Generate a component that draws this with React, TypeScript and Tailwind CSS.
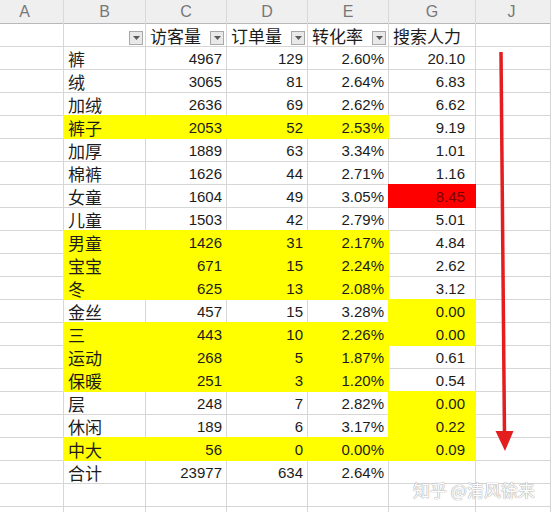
import React from "react";

type Fill = "" | "y" | "r";
type Row = { b: string; c: string; d: string; e: string; g: string; fb: Fill; fg: Fill };

const rows: Row[] = [
  { b: "裤", c: "4967", d: "129", e: "2.60%", g: "20.10", fb: "", fg: "" },
  { b: "绒", c: "3065", d: "81", e: "2.64%", g: "6.83", fb: "", fg: "" },
  { b: "加绒", c: "2636", d: "69", e: "2.62%", g: "6.62", fb: "", fg: "" },
  { b: "裤子", c: "2053", d: "52", e: "2.53%", g: "9.19", fb: "y", fg: "" },
  { b: "加厚", c: "1889", d: "63", e: "3.34%", g: "1.01", fb: "", fg: "" },
  { b: "棉裤", c: "1626", d: "44", e: "2.71%", g: "1.16", fb: "", fg: "" },
  { b: "女童", c: "1604", d: "49", e: "3.05%", g: "8.45", fb: "", fg: "r" },
  { b: "儿童", c: "1503", d: "42", e: "2.79%", g: "5.01", fb: "", fg: "" },
  { b: "男童", c: "1426", d: "31", e: "2.17%", g: "4.84", fb: "y", fg: "" },
  { b: "宝宝", c: "671", d: "15", e: "2.24%", g: "2.62", fb: "y", fg: "" },
  { b: "冬", c: "625", d: "13", e: "2.08%", g: "3.12", fb: "y", fg: "" },
  { b: "金丝", c: "457", d: "15", e: "3.28%", g: "0.00", fb: "", fg: "y" },
  { b: "三", c: "443", d: "10", e: "2.26%", g: "0.00", fb: "y", fg: "y" },
  { b: "运动", c: "268", d: "5", e: "1.87%", g: "0.61", fb: "y", fg: "" },
  { b: "保暖", c: "251", d: "3", e: "1.20%", g: "0.54", fb: "y", fg: "" },
  { b: "层", c: "248", d: "7", e: "2.82%", g: "0.00", fb: "", fg: "y" },
  { b: "休闲", c: "189", d: "6", e: "3.17%", g: "0.22", fb: "", fg: "y" },
  { b: "中大", c: "56", d: "0", e: "0.00%", g: "0.09", fb: "y", fg: "y" },
  { b: "合计", c: "23977", d: "634", e: "2.64%", g: "", fb: "", fg: "" },
];

const cols = "grid grid-cols-[64px_82px_81px_81px_81px_87px_1fr]";
const CN = { fontFamily: '"Noto Sans CJK SC", "Noto Sans", sans-serif' };
const NUM = { fontFamily: '"Liberation Sans", Arial, sans-serif' };

function fillCls(f: Fill) {
  if (f === "y")
    return "bg-[#ffff00] border-[#ffff00] shadow-[-1px_-1px_0_0_#ffff00,0_-1px_0_0_#ffff00,-1px_0_0_0_#ffff00]";
  if (f === "r")
    return "bg-[#ff0000] border-[#ff0000] shadow-[-1px_-1px_0_0_#ff0000,0_-1px_0_0_#ff0000,-1px_0_0_0_#ff0000]";
  return "bg-white border-[#d6d6d6]";
}

const cellBase = "h-[23px] border-r border-b flex items-center";

function FilterBtn() {
  return (
    <span className="ml-auto mr-[2px] self-end mb-[1px] w-[14px] h-[14px] bg-[#e9e9e9] border border-[#a8a8a8] flex items-center justify-center">
      <svg width="7" height="4" viewBox="0 0 7 4">
        <polygon points="0,0 7,0 3.5,4" fill="#5a5a5a" />
      </svg>
    </span>
  );
}

function NumCell({ v, f, pr = "pr-[4px]", red = false }: { v: string; f: Fill; pr?: string; red?: boolean }) {
  return (
    <div className={`${cellBase} ${fillCls(f)} justify-end ${pr}`}>
      <span
        className={`text-[15px] pt-[2px] ${red ? "text-[#800000]" : "text-[#1c1c1c]"}`}
        style={NUM}
      >
        {v}
      </span>
    </div>
  );
}

export default function App() {
  const letters = ["A", "B", "C", "D", "E", "G", "J"];
  return (
    <div className="relative w-[551px] h-[512px] overflow-hidden bg-white">
      {/* column letters */}
      <div className={`${cols} h-[24px] bg-[#efefef] border-b border-[#b8b8b8]`}>
        {letters.map((l, i) => (
          <div
            key={l}
            className={`flex items-center justify-center text-[16px] text-[#777777] border-r border-[#d9d9d9] ${
              i === 0 ? "pr-[14px]" : i === 6 ? "pr-[3px]" : ""
            }`}
            style={NUM}
          >
            {l}
          </div>
        ))}
      </div>

      {/* header row */}
      <div className={cols} style={CN}>
        <div className={`${cellBase} bg-white border-[#d6d6d6]`} />
        <div className={`${cellBase} bg-white border-[#d6d6d6]`}>
          <FilterBtn />
        </div>
        {["访客量", "订单量", "转化率"].map((t) => (
          <div key={t} className={`${cellBase} bg-white border-[#d6d6d6] pl-[4px]`}>
            <span className="text-[17px] text-[#1c1c1c] leading-none pt-[1px]">{t}</span>
            <FilterBtn />
          </div>
        ))}
        <div className={`${cellBase} bg-white border-[#d6d6d6] pl-[4px]`}>
          <span className="text-[17px] text-[#1c1c1c] leading-none pt-[1px]">搜索人力</span>
        </div>
        <div className={`${cellBase} bg-white border-[#d6d6d6]`} />
      </div>

      {/* data rows */}
      {rows.map((r) => (
        <div key={r.b} className={cols}>
          <div className={`${cellBase} bg-white border-[#d6d6d6]`} />
          <div className={`${cellBase} ${fillCls(r.fb)} pl-[4px]`}>
            <span className="text-[17px] text-[#1c1c1c] leading-none pt-[1px]" style={CN}>
              {r.b}
            </span>
          </div>
          <NumCell v={r.c} f={r.fb} />
          <NumCell v={r.d} f={r.fb} />
          <NumCell v={r.e} f={r.fb} />
          <NumCell v={r.g} f={r.fg} pr="pr-[10px]" red={r.fg === "r"} />
          <div className={`${cellBase} bg-white border-[#d6d6d6]`} />
        </div>
      ))}

      {/* empty rows */}
      {[0, 1].map((k) => (
        <div key={k} className={cols}>
          {letters.map((l) => (
            <div key={l} className={`${cellBase} bg-white border-[#d6d6d6]`} />
          ))}
        </div>
      ))}

      {/* red arrow annotation */}
      <svg className="absolute left-0 top-0 pointer-events-none" width="551" height="512">
        <line x1="501" y1="52" x2="504.5" y2="436" stroke="#e41e1e" strokeWidth="3.5" />
        <polygon points="495.5,431 513.5,431 505,451" fill="#e41e1e" />
      </svg>

      {/* watermark */}
      <div
        className="absolute left-[413px] top-[477px] text-[17px] text-[#fdfdfd] whitespace-nowrap pointer-events-none"
        style={{ ...CN, textShadow: "0 0 1px #9a9a9a, 0 0 1px #9a9a9a" }}
      >
        知乎 @清风徐来
      </div>
    </div>
  );
}
